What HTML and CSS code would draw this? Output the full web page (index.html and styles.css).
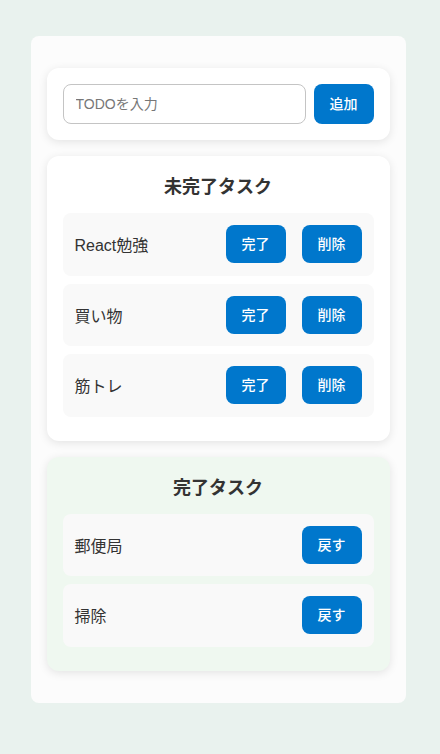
FILE: index.html
```html
<!DOCTYPE html>
<html lang="ja">
<head>
    <meta charset="UTF-8">
    <meta name="viewport" content="width=device-width, initial-scale=1.0">
    <title>TODO</title>
    <link rel="stylesheet" href="styles.css">
</head>
<body>
    <div class="app">
        <div class="card input-area">
            <input type="text" class="todo-input" placeholder="TODOを入力">
            <button class="btn">追加</button>
        </div>

        <div class="card">
            <h2 class="title">未完了タスク</h2>
            <ul class="list">
                <li class="row">
                    <span class="label">React勉強</span>
                    <div class="actions">
                        <button class="btn">完了</button>
                        <button class="btn">削除</button>
                    </div>
                </li>
                <li class="row">
                    <span class="label">買い物</span>
                    <div class="actions">
                        <button class="btn">完了</button>
                        <button class="btn">削除</button>
                    </div>
                </li>
                <li class="row">
                    <span class="label">筋トレ</span>
                    <div class="actions">
                        <button class="btn">完了</button>
                        <button class="btn">削除</button>
                    </div>
                </li>
            </ul>
        </div>

        <div class="card done">
            <h2 class="title">完了タスク</h2>
            <ul class="list">
                <li class="row">
                    <span class="label">郵便局</span>
                    <div class="actions">
                        <button class="btn">戻す</button>
                    </div>
                </li>
                <li class="row">
                    <span class="label">掃除</span>
                    <div class="actions">
                        <button class="btn">戻す</button>
                    </div>
                </li>
            </ul>
        </div>
    </div>
</body>
</html>
```

FILE: styles.css
```css
body{
    margin: 0;
    padding-right: 4px;
    background: #e9f2ee;
    font-family: "Liberation Sans", "Noto Sans CJK JP", sans-serif;
    color: #333;
}
.app{
    width: 375px;
    margin: 36px auto 52px;
    padding: 32px 16px;
    box-sizing: border-box;
    background: #fcfcfc;
    border-radius: 8px;
    display: flex;
    flex-direction: column;
    gap: 16px;
}
.card{
    background: #fff;
    border-radius: 12px;
    padding: 16px 16px 24px;
    box-shadow: 0 2px 10px rgba(0, 0, 0, 0.1);
}
.card.done{
    background: #eff8f0;
}
.input-area{
    display: flex;
    gap: 8px;
    padding: 16px;
}
.todo-input{
    flex: 1;
    height: 40px;
    box-sizing: border-box;
    padding: 0 12px;
    border: 1px solid #c4c4c4;
    border-radius: 8px;
    font-size: 14px;
    font-family: inherit;
    color: #333;
}
.todo-input::placeholder{
    color: #777;
}
.btn{
    height: 38px;
    padding: 0 15px;
    border: none;
    border-radius: 8px;
    background: #0077cc;
    color: #fff;
    font-family: inherit;
    font-size: 14px;
    font-weight: 500;
    line-height: 38px;
}
.input-area .btn{
    height: 40px;
    width: 60px;
    padding: 0;
}
.title{
    margin: 2px 0 12px;
    font-size: 18px;
    line-height: 27px;
    text-align: center;
    font-weight: bold;
}
.list{
    list-style: none;
    margin: 0;
    padding: 0;
    display: flex;
    flex-direction: column;
    gap: 8px;
}
.row{
    display: flex;
    align-items: center;
    justify-content: space-between;
    padding: 12px;
    height: 62.5px;
    box-sizing: border-box;
    background: #f9f9f9;
    border-radius: 8px;
}
.label{
    font-size: 16px;
}
.actions{
    display: flex;
    gap: 16px;
}
.actions .btn{
    width: 60px;
    padding: 0;
}
```
